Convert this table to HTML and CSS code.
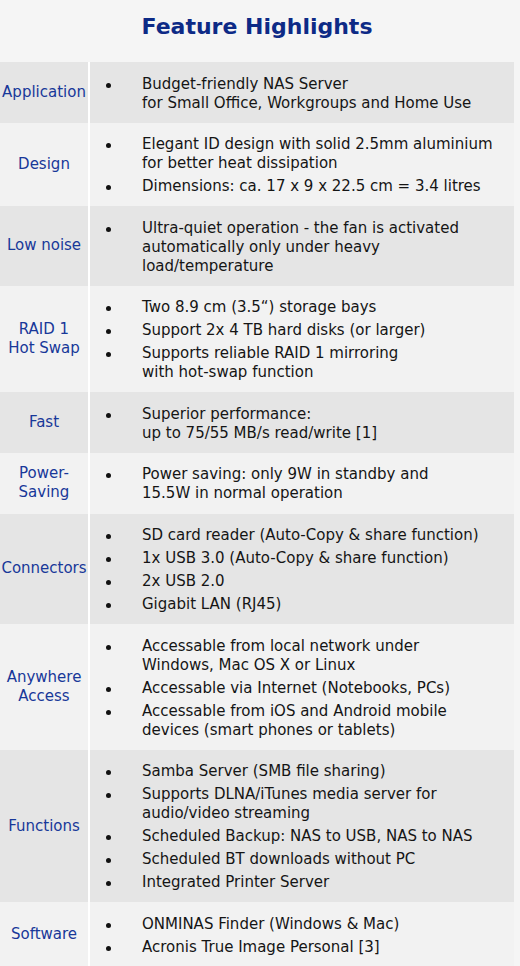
FILE: index.html
```html
<!DOCTYPE html>
<html>
<head>
<meta charset="utf-8">
<link rel="stylesheet" href="styles.css">
</head>
<body>
<div class="page">
  <h1 class="title">Feature Highlights</h1>
  <div class="table">
    <div class="row dark">
      <div class="label">Application</div>
      <ul class="items">
        <li>Budget-friendly NAS Server<br>for Small Office, Workgroups and Home Use</li>
      </ul>
    </div>
    <div class="row light">
      <div class="label">Design</div>
      <ul class="items">
        <li>Elegant ID design with solid 2.5mm aluminium<br>for better heat dissipation</li>
        <li>Dimensions: ca. 17 x 9 x 22.5 cm = 3.4 litres</li>
      </ul>
    </div>
    <div class="row dark">
      <div class="label">Low noise</div>
      <ul class="items">
        <li>Ultra-quiet operation - the fan is activated<br>automatically only under heavy<br>load/temperature</li>
      </ul>
    </div>
    <div class="row light">
      <div class="label">RAID 1<br>Hot Swap</div>
      <ul class="items">
        <li>Two 8.9 cm (3.5“) storage bays</li>
        <li>Support 2x 4 TB hard disks (or larger)</li>
        <li>Supports reliable RAID 1 mirroring<br>with hot-swap function</li>
      </ul>
    </div>
    <div class="row dark">
      <div class="label">Fast</div>
      <ul class="items">
        <li>Superior performance:<br>up to 75/55 MB/s read/write [1]</li>
      </ul>
    </div>
    <div class="row light">
      <div class="label">Power-<br>Saving</div>
      <ul class="items">
        <li>Power saving: only 9W in standby and<br>15.5W in normal operation</li>
      </ul>
    </div>
    <div class="row dark">
      <div class="label">Connectors</div>
      <ul class="items">
        <li>SD card reader (Auto-Copy &amp; share function)</li>
        <li>1x USB 3.0 (Auto-Copy &amp; share function)</li>
        <li>2x USB 2.0</li>
        <li>Gigabit LAN (RJ45)</li>
      </ul>
    </div>
    <div class="row light">
      <div class="label">Anywhere<br>Access</div>
      <ul class="items">
        <li>Accessable from local network under<br>Windows, Mac OS X or Linux</li>
        <li>Accessable via Internet (Notebooks, PCs)</li>
        <li>Accessable from iOS and Android mobile<br>devices (smart phones or tablets)</li>
      </ul>
    </div>
    <div class="row dark">
      <div class="label">Functions</div>
      <ul class="items">
        <li>Samba Server (SMB file sharing)</li>
        <li>Supports DLNA/iTunes media server for<br>audio/video streaming</li>
        <li>Scheduled Backup: NAS to USB, NAS to NAS</li>
        <li>Scheduled BT downloads without PC</li>
        <li>Integrated Printer Server</li>
      </ul>
    </div>
    <div class="row light">
      <div class="label">Software</div>
      <ul class="items">
        <li>ONMINAS Finder (Windows &amp; Mac)</li>
        <li>Acronis True Image Personal [3]</li>
      </ul>
    </div>
  </div>
</div>
</body>
</html>
```

FILE: styles.css
```css
html, body {
  margin: 0;
  padding: 0;
  background: #f5f5f5;
}
.page {
  width: 514px;
  font-family: "DejaVu Sans", sans-serif;
}
.title {
  margin: 0;
  height: 62px;
  line-height: 54px;
  text-align: center;
  font-size: 22px;
  font-weight: bold;
  color: #0d2a86;
}
.table {
  display: flex;
  flex-direction: column;
}
.row {
  display: flex;
}
.row.dark { background: #e5e5e5; }
.row.light { background: #f2f2f2; }
.label {
  width: 88px;
  flex: none;
  display: flex;
  align-items: center;
  justify-content: center;
  text-align: center;
  font-size: 15px;
  line-height: 19px;
  color: #183899;
  border-right: 2px solid #ffffff;
  white-space: nowrap;
}
.items {
  flex: 1;
  margin: 0;
  list-style: none;
  padding: 12.5px 0 10.1px 15px;
  display: flex;
  flex-direction: column;
  gap: 4px;
  font-size: 15px;
  line-height: 19px;
  color: #151515;
  white-space: nowrap;
}
.items li {
  position: relative;
  padding-left: 37px;
}
.items li::before {
  content: "";
  position: absolute;
  left: 1px;
  top: 8px;
  width: 5px;
  height: 5px;
  border-radius: 50%;
  background: #111111;
}
```
